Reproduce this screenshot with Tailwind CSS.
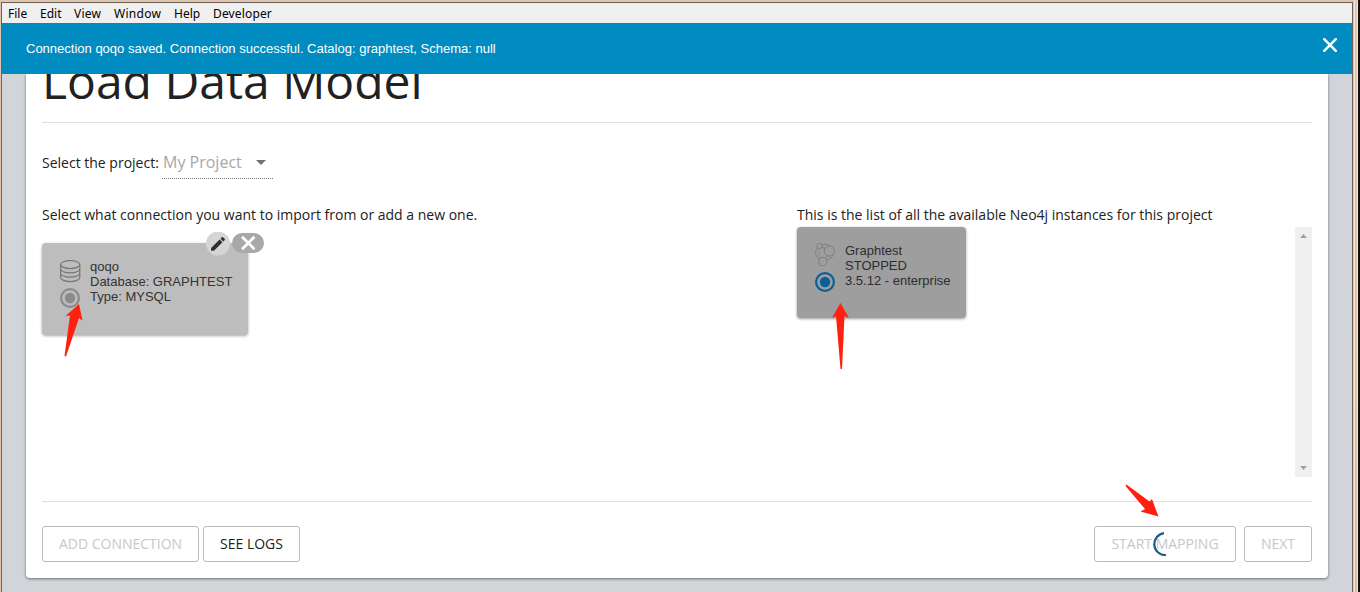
<!DOCTYPE html>
<html lang="en">
<head>
<meta charset="utf-8">
<title>Load Data Model</title>
<script src="https://cdn.jsdelivr.net/npm/@tailwindcss/browser@4"></script>
</head>
<body class="relative h-[592px] w-[1360px] overflow-hidden bg-[#dfc4ae] font-['Open_Sans',sans-serif] text-[#212121]">
<div class="flex h-[592px] w-[1360px] border-r-2 border-[#111]">
  <div class="mt-0.5 ml-px flex h-[590px] w-[1352px] flex-col border-x border-t border-[#6b625b] bg-[#d1d5da]">
    <nav class="flex h-5 shrink-0 items-center bg-[#f0f0f0] pt-0.5 pl-1.5 font-['Noto_Sans',sans-serif] text-[12px] leading-5 text-black">
      <span class="w-8">File</span><span class="w-[34px]">Edit</span><span class="w-10 tracking-[0.2px]">View</span><span class="w-[60px] tracking-[0.3px]">Window</span><span class="w-[39px]">Help</span><span class="tracking-[0.15px]">Developer</span>
    </nav>
    <div class="z-10 flex h-[51px] shrink-0 items-center justify-between bg-[#008cc1] pr-[15px] pl-6 font-['Liberation_Sans',sans-serif] text-[13px] text-white">
      <span>Connection qoqo saved. Connection successful. Catalog: graphtest, Schema: null</span>
      <svg class="mb-[7px] size-3.5" viewBox="0 0 14 14" stroke="white" stroke-width="2.5" stroke-linecap="round"><path d="M1.2 1.2 12.8 12.8M12.8 1.2 1.2 12.8"/></svg>
    </div>
    <main class="mx-6 flex h-[504px] shrink-0 flex-col rounded-b bg-white px-4 shadow-[0_1px_3px_rgba(0,0,0,0.5)]">
      <h1 class="-mt-[29px] h-[78px] border-b border-[#e0e0e0] text-[48px] leading-[72px] whitespace-nowrap">Load Data Model</h1>
      <div class="mt-6 flex h-8 w-full items-start text-[14px]">
        <span class="mt-1.5 w-[120px] leading-5 whitespace-nowrap">Select the project:</span>
        <div class="flex h-8 w-[111px] items-center border-b border-dotted border-[#777] pr-[7px] text-[16px] text-[#a8a8a8]">
          <span class="mb-0.5 grow pl-px">My Project</span>
          <svg class="h-[5px] w-2.5" viewBox="0 0 10 5" fill="#737373"><path d="M0 0H10L5 5Z"/></svg>
        </div>
      </div>
      <div class="mt-[26px] flex h-[272px] w-full">
        <section class="w-[755px]">
          <p class="h-[38px] text-[14px] leading-5">Select what connection you want to import from or add a new one.</p>
          <div class="relative flex h-[92px] w-[206px] rounded bg-[#bdbdbd] pt-4 pl-[18px] font-['Liberation_Sans',sans-serif] text-[13px] leading-[15px] text-[#333] shadow-[0_1px_3px_rgba(0,0,0,0.35)]">
            <div class="flex w-[30px] flex-col">
              <svg class="h-6 w-[22px]" viewBox="0 0 22 24" fill="none" stroke="#777" stroke-width="1.2"><ellipse cx="10.2" cy="5.6" rx="9.6" ry="4"/><path d="M.6 5.600v13c0 2.200 4.300 4 9.600 4s9.600-1.800 9.600-4v-13M.6 9.900c0 2.200 4.300 4 9.600 4s9.600-1.800 9.600-4M.6 14.200c0 2.200 4.300 4 9.600 4s9.600-1.800 9.600-4"/></svg>
              <svg class="mt-[5px] size-5" viewBox="0 0 20 20"><circle cx="10" cy="10" r="8.900" fill="none" stroke="#8b8b8b" stroke-width="2.200"/><circle cx="10" cy="10" r="5.200" fill="#8b8b8b"/></svg>
            </div>
            <div class="whitespace-nowrap"><p>qoqo</p><p>Database: GRAPHTEST</p><p>Type: MYSQL</p></div>
            <svg class="absolute -top-[11px] left-[164px] h-6 w-[60px]" viewBox="0 0 60 24"><circle cx="12" cy="11.5" r="12" fill="#d5d5d5"/><path transform="translate(2.8 2.7) scale(.77)" fill="#332f30" d="M3 17.25V21h3.75L17.81 9.94l-3.75-3.75L3 17.25zM20.71 7.04a1 1 0 0 0 0-1.41l-2.34-2.34a1 1 0 0 0-1.41 0l-1.83 1.83 3.75 3.75 1.83-1.83z"/><rect x="26" y="1" width="32" height="20" rx="10" fill="#a8a8a8"/><path d="M36 4.700 48.500 17.200M48.500 4.700 36 17.200" stroke="white" stroke-width="2.700"/></svg>
          </div>
        </section>
        <section class="flex w-[515px] flex-col">
          <p class="h-[22px] text-[14px] leading-5">This is the list of all the available Neo4j instances for this project</p>
          <div class="flex h-[250px] justify-between">
            <div class="flex h-[91px] w-[169px] rounded bg-[#9e9e9e] pt-4 pl-[18px] font-['Liberation_Sans',sans-serif] text-[13px] leading-[15px] text-[#2d2d2d] shadow-[0_1px_3px_rgba(0,0,0,0.4)]">
              <div class="flex w-[30px] flex-col">
                <svg class="h-6 w-5" viewBox="0 0 20 24" fill="none" stroke="#7c7c7c" stroke-width=".9"><circle cx="4.600" cy="2.900" r="2.700"/><circle cx="14.300" cy="8" r="5.100"/><circle cx="7.700" cy="18.600" r="4.100"/><path d="M7.200 1.800c3-.9 6-.4 7.800 1.300M2.400 4.800C-.3 8.300 0 13.500 4.400 16.300M11.900 17c4-1.100 6-3.300 6.300-6M7 4.300c1 .3 1.700.5 3 1.200M12.600 12.900c-.8 1-1.400 1.600-2.300 2.400"/><path d="M4 6.200c-.9 2.500-.4 5.700 1.400 8.200" stroke-dasharray="1.300 1.100"/></svg>
                <svg class="mt-[5px] size-5" viewBox="0 0 20 20"><circle cx="10" cy="10" r="8.900" fill="none" stroke="#0d5e97" stroke-width="2.200"/><circle cx="10" cy="10" r="5.200" fill="#0d5e97"/></svg>
              </div>
              <div class="whitespace-nowrap"><p>Graphtest</p><p>STOPPED</p><p>3.5.12 - enterprise</p></div>
            </div>
            <div class="flex h-[250px] w-[17px] flex-col items-center justify-between bg-[#f0f0f0] py-[7px]">
              <svg class="h-1 w-[7px]" viewBox="0 0 7 4" fill="#a0a0a0"><path d="M0 4 3.500 0 7 4Z"/></svg>
              <svg class="h-1 w-[7px]" viewBox="0 0 7 4" fill="#a0a0a0"><path d="M0 0H7L3.500 4Z"/></svg>
            </div>
          </div>
        </section>
      </div>
      <footer class="mt-6 flex w-full items-start gap-1 border-t border-[#e0e0e0] pt-6 text-[14px]">
        <button class="h-9 w-[157px] rounded-[3px] border border-[#bbb] pb-0.5 text-[#c8c8c8]">ADD CONNECTION</button>
        <button class="h-9 w-[97px] rounded-[3px] border border-[#bbb] pb-0.5 text-[#212121]">SEE LOGS</button>
        <button class="relative mr-1 ml-auto h-9 w-[142px] rounded-[3px] border border-[#bbb] pb-0.5 text-[#c8c8c8]">START MAPPING
          <svg class="absolute top-[5px] left-[57px] size-6" viewBox="0 0 24 24" fill="none" stroke="#17608f" stroke-width="2.200"><path d="M12 1.200A11 11 0 0 0 14 23.100"/></svg>
        </button>
        <button class="h-9 w-[68px] rounded-[3px] border border-[#bbb] pb-0.5 text-[#c8c8c8]">NEXT</button>
      </footer>
    </main>
  </div>
  <div class="ml-px h-full w-[5px] border-x border-[#f6e8dc] bg-linear-to-b from-[#dfc5b2] via-[#e3c1a2] to-[#d8b99f]"></div>
</div>
<svg class="pointer-events-none absolute inset-0 z-20" width="1360" height="592" fill="#ff2010">
  <path d="M79 304 82.500 320.500 79 318 66 356.500 64.500 356 70 315.500 65.500 316Z"/>
  <path d="M840.500 303 849 318 844.500 316 842 369H840.500L836 316 832 318Z"/>
  <path d="M1126.500 484.500 1149.500 501.500 1152 499 1158.500 516.500 1140.500 511.500 1145 509 1125.500 486Z"/>
</svg>
</body>
</html>
